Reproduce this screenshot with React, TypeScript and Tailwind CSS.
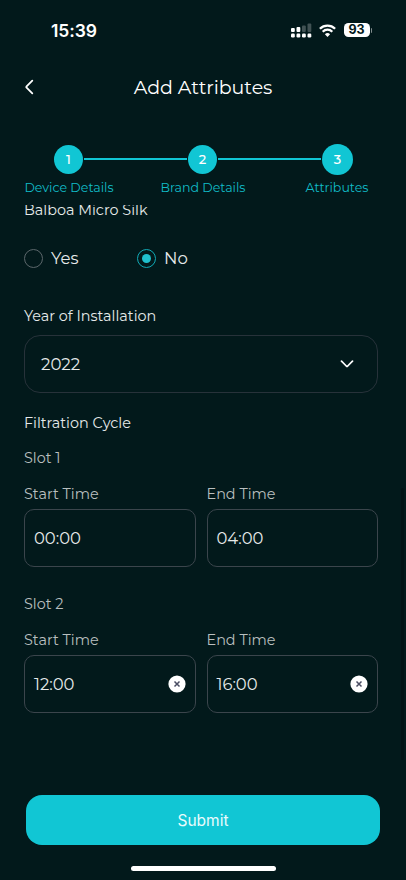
import { Fragment } from 'react'

const steps = [
  { id: 1, label: 'Device Details' },
  { id: 2, label: 'Brand Details' },
  { id: 3, label: 'Attributes' },
]

function StatusBar() {
  return (
    <div className="flex h-[60px] items-center pl-[51px] pr-[34px] font-['Inter',sans-serif] text-white">
      <span className="pt-px text-[17.5px] font-semibold leading-none tracking-[-0.1px]">15:39</span>
      <div className="ml-auto flex items-center">
        <svg width="21" height="15" viewBox="0 0 21 15" fill="currentColor">
          <rect x="0" y="5" width="3.8" height="4" rx="1" />
          <rect x="5.5" y="4" width="3.8" height="5" rx="1" />
          <rect x="11" y="2.5" width="3.8" height="6.5" rx="1" opacity="0.25" />
          <rect x="16.5" y="0.5" width="3.8" height="8.5" rx="1" opacity="0.25" />
          <rect x="0" y="10.5" width="3.8" height="4" rx="1.2" />
          <rect x="5.5" y="10.5" width="3.8" height="4" rx="1.2" />
          <rect x="11" y="10.5" width="3.8" height="4" rx="1.2" />
          <rect x="16.5" y="10.5" width="3.8" height="4" rx="1.2" />
        </svg>
        <svg className="ml-[7px]" width="17" height="13" viewBox="0 0 17 13" fill="none" stroke="currentColor" strokeWidth="2.3">
          <path d="M0.9 4.7a10.8 10.8 0 0 1 15.2 0" />
          <path d="M3.7 7.7a6.8 6.8 0 0 1 9.6 0" />
          <path d="M8.5 12.9 5.9 10.2a3.7 3.7 0 0 1 5.2 0z" fill="currentColor" stroke="none" />
        </svg>
        <div className="ml-[8px] flex h-[14px] w-[26px] items-center justify-center rounded-[4.5px] bg-white text-[12.5px] font-bold leading-none text-[#02191b]">
          93
        </div>
        <div className="ml-px h-[5px] w-[1.5px] rounded-r-full bg-white/50" />
      </div>
    </div>
  )
}

function Stepper() {
  return (
    <div className="mt-[30px] h-[62px]">
      <div className="flex h-[32px] items-center pl-[54px] pr-[53px]">
        {steps.map((s, i) => (
          <Fragment key={s.id}>
            {i > 0 && <div className="mx-px h-[2px] flex-1 bg-[#11c6d4]" />}
            <div
              className={`flex items-center justify-center rounded-full bg-[#11c6d4] pt-px text-[13px] font-medium text-white ${
                s.id === 3 ? 'size-[31px]' : 'size-[29px]'
              }`}
            >
              {s.id}
            </div>
          </Fragment>
        ))}
      </div>
      <div className="ml-[2px] mt-[4px] grid w-[402px] grid-cols-3 text-center text-[12.6px] leading-[18px] text-[#11bcc8]">
        {steps.map((s) => (
          <span key={s.id}>{s.label}</span>
        ))}
      </div>
    </div>
  )
}

function Radio({ label, checked }: { label: string; checked?: boolean }) {
  return (
    <div className="flex w-[113px] items-center">
      <div
        className={`flex size-[19px] items-center justify-center rounded-full border ${
          checked ? 'border-[#11aab6]' : 'border-[#5c676b]'
        }`}
      >
        {checked && <div className="size-[9px] rounded-full bg-[#1fc0cd]" />}
      </div>
      <span className="ml-[8px] text-[16.5px] leading-[20px] text-[#e6eaea]">{label}</span>
    </div>
  )
}

function TimeField({ label, value, clearable }: { label: string; value: string; clearable?: boolean }) {
  return (
    <div className="flex-1">
      <div className="h-[24px] text-[14.4px] leading-[18px] text-[#b9bfbf]">{label}</div>
      <div className="flex h-[58px] items-center rounded-[10px] border border-[#3b454c] pl-[9px] pr-[9px]">
        <span className="pt-px text-[16.4px] leading-none text-[#e6eaea]">{value}</span>
        {clearable && (
          <svg className="ml-auto" width="18" height="18" viewBox="0 0 18 18">
            <circle cx="9" cy="9" r="8.6" fill="#fff" />
            <path d="M6.5 6.5 11.5 11.5M11.5 6.5 6.5 11.5" stroke="#4a4d63" strokeWidth="1.5" />
          </svg>
        )}
      </div>
    </div>
  )
}

export default function App() {
  return (
    <div className="relative flex h-[880px] w-[406px] flex-col overflow-hidden bg-[#02191b] font-['Montserrat','Inter',sans-serif] text-[#e6eaea]">
      <StatusBar />

      <div className="grid h-[53px] grid-cols-[60px_1fr_60px] items-center">
        <svg className="ml-[24px]" width="10" height="16" viewBox="0 0 10 16" fill="none" stroke="#fff" strokeWidth="1.8" strokeLinecap="round" strokeLinejoin="round">
          <path d="M8.3 1.7 2.6 7.3q-.7.7 0 1.4L8.3 14.3" />
        </svg>
        <h1 className="pt-px text-center text-[19px] font-normal leading-none tracking-[-0.05px] text-white">Add Attributes</h1>
      </div>

      <Stepper />

      <div className="h-[564px] overflow-hidden pl-[24px] pr-[28px]">
        <div className="-mt-[4px] h-[18px] text-[14.4px] leading-[18px]">Balboa Micro Silk</div>
        <div className="mt-[29px] flex h-[20px] items-center">
          <Radio label="Yes" />
          <Radio label="No" checked />
        </div>

        <div className="mt-[39px] text-[14.4px] leading-[18px]">Year of Installation</div>
        <div className="mt-[10px] flex h-[58px] items-center rounded-[16px] border border-[#27323a] pl-[16px] pr-[23px]">
          <span className="pt-px text-[16.6px] leading-none">2022</span>
          <svg className="ml-auto" width="14" height="8" viewBox="0 0 14 8" fill="none" stroke="#fff" strokeWidth="1.7" strokeLinecap="round" strokeLinejoin="round">
            <path d="M1.5 1.2 6.3 6q.7.6 1.4 0L12.5 1.2" />
          </svg>
        </div>

        <div className="mt-[21px] text-[14.4px] leading-[18px]">Filtration Cycle</div>
        <div className="mt-[17px] text-[14.4px] leading-[18px] text-[#b9bfbf]">Slot 1</div>
        <div className="mt-[18px] flex gap-[11px]">
          <TimeField label="Start Time" value="00:00" />
          <TimeField label="End Time" value="04:00" />
        </div>
        <div className="mt-[28px] text-[14.4px] leading-[18px] text-[#b9bfbf]">Slot 2</div>
        <div className="mt-[18px] flex gap-[11px]">
          <TimeField label="Start Time" value="12:00" clearable />
          <TimeField label="End Time" value="16:00" clearable />
        </div>
      </div>

      <div className="mt-[26px] flex flex-col items-center">
        <button className="h-[50px] w-[354px] rounded-[16px] bg-[#11c6d4] pt-px font-['Inter',sans-serif] text-[15.5px] text-[#e9fbfc]">
          Submit
        </button>
        <div className="mt-[21px] h-[5px] w-[145px] rounded-full bg-white" />
      </div>

      {/* scroll indicator */}
      <div className="absolute left-[401px] top-[488px] h-[272px] w-[3px] rounded-full bg-[#011315]" />
    </div>
  )
}
